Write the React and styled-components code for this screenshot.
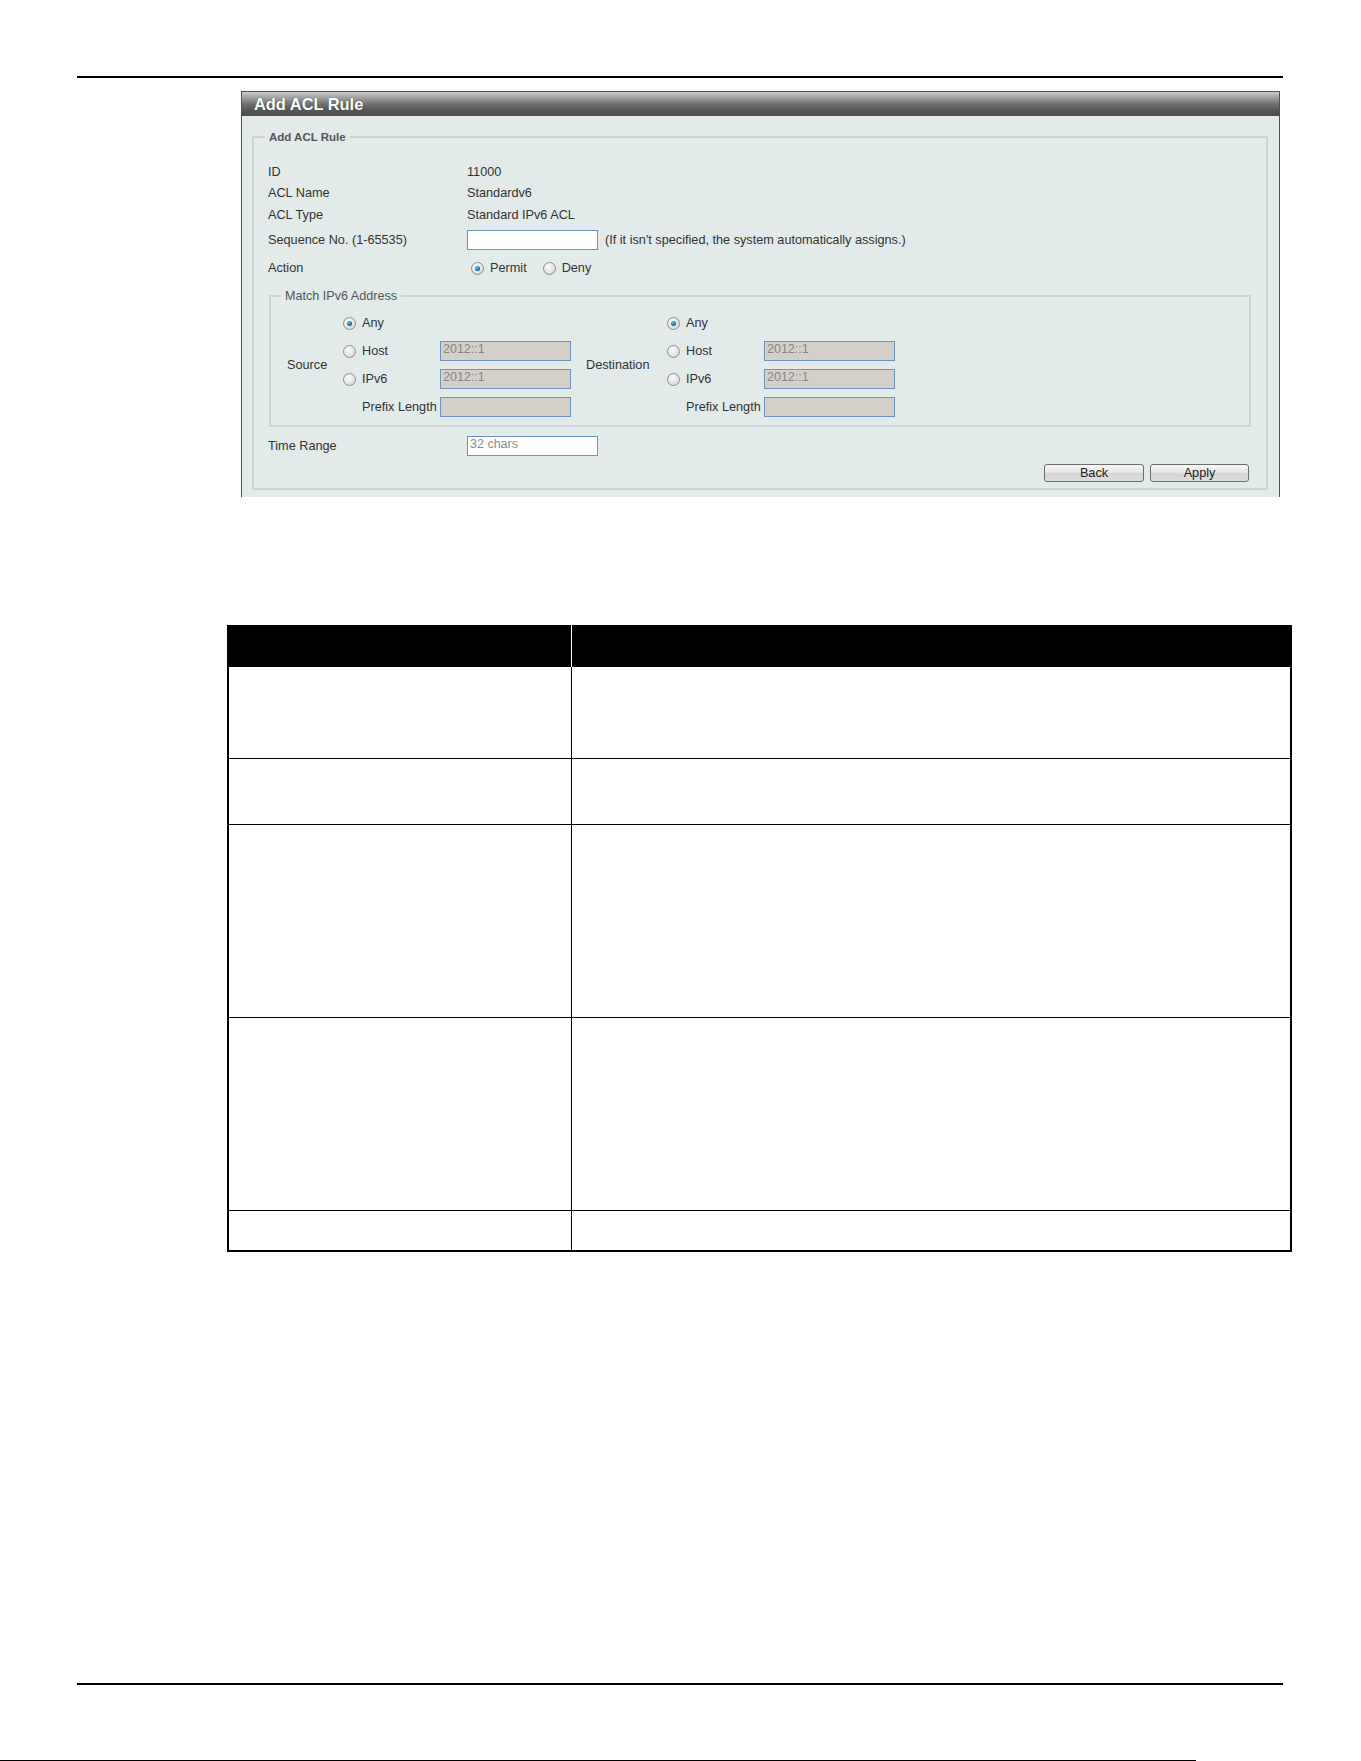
import React from 'react';
import styled, { createGlobalStyle } from 'styled-components';

const GlobalStyle = createGlobalStyle`
  html, body {
    margin: 0;
    padding: 0;
    background: #fff;
  }
  body {
    font-family: "Liberation Sans", Arial, sans-serif;
  }
`;

const Page = styled.div`
  width: 1361px;
  height: 1761px;
  display: flex;
  flex-direction: column;
  background: #fff;
  overflow: hidden;
`;

const Rule = styled.div`
  margin: ${({ top }) => top}px 0 0 77px;
  width: 1206px;
  height: 2px;
  background: #000;
  flex-shrink: 0;
`;

const EdgeLine = styled.div`
  margin-top: auto;
  width: 1196px;
  height: 1px;
  background: #000;
`;

const Panel = styled.section`
  margin: 13px 0 0 241px;
  width: 1039px;
  box-sizing: border-box;
  border: 1px solid #1d5e96;
  border-bottom: none;
  background: #e2eaea;
  padding-bottom: 7px;
  flex-shrink: 0;
`;

const PanelHeader = styled.div`
  height: 24px;
  display: flex;
  align-items: center;
  padding-left: 12px;
  background: linear-gradient(#cbcbcb 0%, #a4a4a4 22%, #707070 50%, #565656 75%, #4e4e4e 100%);
  color: #fff;
  font-size: 16.4px;
  font-weight: bold;
  text-shadow: 0 0 1px #333;
`;

const PanelBody = styled.div`
  padding: 14px 11px 0 10px;
`;

const Group = styled.fieldset`
  margin: ${({ nested }) => (nested ? '7px 0 0 1px' : '0')};
  padding: ${({ nested }) => (nested ? '6px 16px 4px 16px' : '17px 15px 6px 14px')};
  border: 2px solid #cad4d4;
  min-width: 0;
`;

const Legend = styled.legend`
  padding: 0 4px;
  margin-left: ${({ nested }) => (nested ? -6 : -3)}px;
  font-size: ${({ nested }) => (nested ? 12.6 : 11.5)}px;
  font-weight: ${({ nested }) => (nested ? 'normal' : 'bold')};
  line-height: 14px;
  color: #555;
`;

const FieldRow = styled.div`
  display: flex;
  align-items: center;
  height: ${({ h }) => h}px;
  margin-top: ${({ mt }) => mt || 0}px;
  font-size: 12.7px;
  color: #333;
`;

const Label = styled.span`
  width: ${({ w }) => w || 199}px;
  flex-shrink: 0;
`;

const Value = styled.span`
  color: #333;
`;

const TextBox = styled.input`
  box-sizing: border-box;
  width: 131px;
  height: 20px;
  margin: 0;
  padding: 0 2px 5px;
  border: 1px solid #6f93c0;
  background: ${({ disabled }) => (disabled ? '#d4d0c8' : '#fff')};
  font-family: "Liberation Sans", Arial, sans-serif;
  font-size: 12.5px;
  color: #858585;
  outline: none;
  &::placeholder {
    color: #8e8e8e;
  }
`;

const Hint = styled.span`
  margin-left: 7px;
  color: #333;
`;

const RadioWrap = styled.label`
  display: inline-flex;
  align-items: center;
  gap: 6px;
  margin-right: ${({ gap }) => gap || 0}px;
  color: #333;
`;

const RadioDot = styled.span`
  position: relative;
  width: 11px;
  height: 11px;
  border-radius: 50%;
  border: 1px solid #8f9191;
  background: radial-gradient(circle at 40% 35%, #fbfbfb 0%, #e2e2e2 60%, #c4c4c4 100%);
  flex-shrink: 0;
  &::after {
    content: '';
    display: ${({ checked }) => (checked ? 'block' : 'none')};
    position: absolute;
    left: 3px;
    top: 3px;
    width: 5px;
    height: 5px;
    border-radius: 50%;
    background: radial-gradient(circle at 40% 35%, #6cc6f2 0%, #1a78b8 50%, #0b3f6b 100%);
  }
`;

const Radio = ({ checked, children, gap }) => (
  <RadioWrap gap={gap}>
    <RadioDot checked={checked} />
    {children}
  </RadioWrap>
);

const MatchBody = styled.div`
  display: flex;
  align-items: center;
  font-size: 12.7px;
  color: #333;
`;

const SideLabel = styled.span`
  width: ${({ w }) => w}px;
  flex-shrink: 0;
`;

const OptionGrid = styled.div`
  display: grid;
  grid-template-columns: 13px 72px 132px;
  column-gap: 6px;
  grid-auto-rows: 28px;
  align-items: center;
  margin-right: ${({ gap }) => gap || 0}px;
`;

const OptionText = styled.span`
  grid-column: ${({ wide }) => (wide ? '1 / 3' : '2')};
  padding-left: ${({ wide }) => (wide ? 19 : 0)}px;
  white-space: nowrap;
`;

const ButtonRow = styled.div`
  display: flex;
  justify-content: flex-end;
  gap: 6px;
  margin: 6px 2px 0 0;
`;

const Button = styled.button`
  box-sizing: border-box;
  width: ${({ w }) => w}px;
  height: 18px;
  padding: 0;
  border: 1px solid #6e6e6e;
  border-radius: 3px;
  background: linear-gradient(#f6f6f6 0%, #e8e8e8 45%, #d6d6d6 55%, #dedede 100%);
  font-family: "Liberation Sans", Arial, sans-serif;
  font-size: 12.7px;
  color: #222;
  line-height: 16px;
`;

const AddressSide = ({ name, width, gap }) => (
  <>
    <SideLabel w={width}>{name}</SideLabel>
    <OptionGrid gap={gap}>
      <RadioDot checked />
      <OptionText>Any</OptionText>
      <span />
      <RadioDot />
      <OptionText>Host</OptionText>
      <TextBox disabled value="2012::1" readOnly />
      <RadioDot />
      <OptionText>IPv6</OptionText>
      <TextBox disabled value="2012::1" readOnly />
      <OptionText wide>Prefix Length</OptionText>
      <TextBox disabled value="" readOnly />
    </OptionGrid>
  </>
);

const InfoTable = styled.table`
  margin: 128px 0 0 227px;
  width: 1065px;
  border-collapse: collapse;
  border-left: 2px solid #000;
  border-right: 2px solid #000;
  border-bottom: 2px solid #000;
  flex-shrink: 0;
`;

const HeadCell = styled.th`
  height: 40px;
  padding: 0;
  background: #000;
  border-top: 1px solid #000;
  border-right: ${({ split }) => (split ? '1px solid #fff' : 'none')};
  width: ${({ w }) => (w ? `${w}px` : 'auto')};
`;

const Cell = styled.td`
  height: ${({ h }) => h}px;
  padding: 0;
  border-top: 1px solid #000;
  border-right: ${({ split }) => (split ? '1px solid #000' : 'none')};
`;

const rowHeights = [91, 65, 192, 192, 39];

const App = () => (
  <Page>
    <GlobalStyle />
    <Rule top={76} />
    <Panel>
      <PanelHeader>Add ACL Rule</PanelHeader>
      <PanelBody>
        <Group>
          <Legend>Add ACL Rule</Legend>
          <FieldRow h={21}>
            <Label>ID</Label>
            <Value>11000</Value>
          </FieldRow>
          <FieldRow h={22}>
            <Label>ACL Name</Label>
            <Value>Standardv6</Value>
          </FieldRow>
          <FieldRow h={22}>
            <Label>ACL Type</Label>
            <Value>Standard IPv6 ACL</Value>
          </FieldRow>
          <FieldRow h={28}>
            <Label>Sequence No. (1-65535)</Label>
            <TextBox />
            <Hint>(If it isn't specified, the system automatically assigns.)</Hint>
          </FieldRow>
          <FieldRow h={28}>
            <Label w={203}>Action</Label>
            <Radio checked gap={16}>Permit</Radio>
            <Radio>Deny</Radio>
          </FieldRow>
          <Group nested>
            <Legend nested>Match IPv6 Address</Legend>
            <MatchBody>
              <AddressSide name="Source" width={56} gap={14} />
              <AddressSide name="Destination" width={81} />
            </MatchBody>
          </Group>
          <FieldRow h={24} mt={7}>
            <Label>Time Range</Label>
            <TextBox placeholder="32 chars" />
          </FieldRow>
          <ButtonRow>
            <Button w={100}>Back</Button>
            <Button w={99}>Apply</Button>
          </ButtonRow>
        </Group>
      </PanelBody>
    </Panel>
    <InfoTable>
      <thead>
        <tr>
          <HeadCell split w={342} />
          <HeadCell />
        </tr>
      </thead>
      <tbody>
        {rowHeights.map((h, i) => (
          <tr key={i}>
            <Cell h={h} split />
            <Cell h={h} />
          </tr>
        ))}
      </tbody>
    </InfoTable>
    <Rule top={431} />
    <EdgeLine />
  </Page>
);

export default App;
